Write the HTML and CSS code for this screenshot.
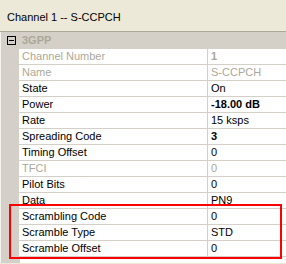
FILE: index.html
```html
<!DOCTYPE html>
<html>
<head>
    <title>Channel 1 -- S-CCPCH</title>
    <link rel="stylesheet" href="styles.css">
</head>
<body>
    <div class="title">Channel 1 -- S-CCPCH</div>

    <div class="grid">
        <div class="category">
            <span class="toggle"></span>
            <span class="category-name">3GPP</span>
        </div>

        <div class="row disabled"><div class="name">Channel Number</div><div class="value bold">1</div></div>
        <div class="row disabled"><div class="name">Name</div><div class="value">S-CCPCH</div></div>
        <div class="row"><div class="name">State</div><div class="value">On</div></div>
        <div class="row"><div class="name">Power</div><div class="value bold">-18.00 dB</div></div>
        <div class="row"><div class="name">Rate</div><div class="value">15 ksps</div></div>
        <div class="row"><div class="name">Spreading Code</div><div class="value bold">3</div></div>
        <div class="row"><div class="name">Timing Offset</div><div class="value">0</div></div>
        <div class="row disabled"><div class="name">TFCI</div><div class="value">0</div></div>
        <div class="row"><div class="name">Pilot Bits</div><div class="value">0</div></div>
        <div class="row"><div class="name">Data</div><div class="value">PN9</div></div>
        <div class="row"><div class="name">Scrambling Code</div><div class="value">0</div></div>
        <div class="row"><div class="name">Scramble Type</div><div class="value">STD</div></div>
        <div class="row"><div class="name">Scramble Offset</div><div class="value">0</div></div>

        <!-- highlight around the scrambling settings -->
        <div class="highlight"></div>
    </div>
</body>
</html>
```

FILE: styles.css
```css
body {
    margin: 0;
    font-family: "Liberation Sans", Arial, sans-serif;
    font-size: 11px;
    color: #000;
    background-color: #ECE9D8;
    height: 264px;
    overflow: hidden;
}
.title {
    height: 32px;
    box-sizing: border-box;
    padding: 10px 0 0 7px;
    line-height: 14px;
    border-bottom: 1px solid #ACA899;
}
.grid {
    position: relative;
    height: 231px;
    background-color: #fff;
    border-left: 1px solid #F4F3EE;
    box-shadow: inset 19px 0 0 #D4D0C8;
}
.category {
    height: 17px;
    background-color: #D4D0C8;
    display: flex;
    align-items: center;
}
.toggle {
    position: relative;
    width: 7px;
    height: 7px;
    border: 1px solid #000;
    margin: 0 6px 0 6px;
}
.toggle::after {
    content: "";
    position: absolute;
    left: 1px;
    top: 3px;
    width: 5px;
    height: 1px;
    background-color: #000;
}
.category-name {
    font-weight: bold;
    color: #ACA899;
    line-height: 15px;
}
.row {
    display: grid;
    grid-template-columns: 189px 1fr;
    margin-left: 18px;
    height: 16px;
    box-sizing: border-box;
    border-bottom: 1px solid #D4D0C8;
    line-height: 15px;
    background-color: #fff;
}
.name {
    padding-left: 3px;
    border-right: 1px solid #D4D0C8;
    white-space: nowrap;
}
.value {
    padding-left: 3px;
    white-space: nowrap;
}
.bold {
    font-weight: bold;
}
.disabled {
    color: #ACA899;
}
.highlight {
    position: absolute;
    left: 8px;
    top: 172px;
    width: 269px;
    height: 51px;
    border: 2px solid #FF0000;
}
```
